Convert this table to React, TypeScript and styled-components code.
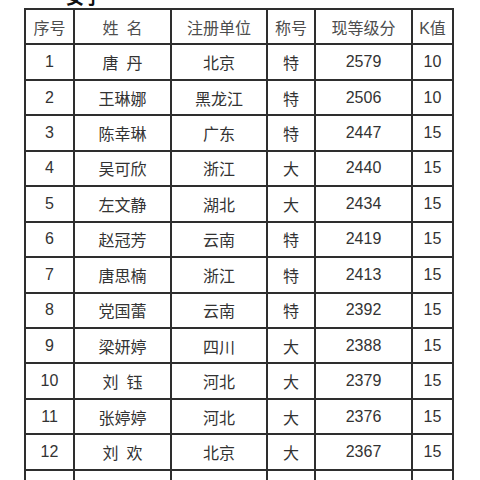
import React from "react";
import styled, { createGlobalStyle } from "styled-components";

const Global = createGlobalStyle`
  html, body { margin: 0; padding: 0; background: #fff; overflow: hidden; }
  body { font-family: "Liberation Sans", "Noto Sans CJK SC", sans-serif; }
`;

const Page = styled.div`
  padding-left: 24px;
  width: 480px;
  height: 480px;
  box-sizing: border-box;
  overflow: hidden;
`;

const Title = styled.div`
  margin: -13px 0 0 42px;
  height: 19px;
  font-size: 18px;
  line-height: 19px;
  font-weight: 700;
  color: #111;
  font-family: "Noto Sans CJK SC", sans-serif;
`;

const Grid = styled.div`
  margin-top: 2px;
  display: inline-grid;
  grid-template-columns: 47px 95px 94px 46px 95px 39px;
  grid-auto-rows: 33.44px;
  gap: 2px;
  padding: 2px;
  background: #2e2e2e;
`;

const Cell = styled.div<{ $head?: boolean }>`
  background: #fff;
  display: flex;
  align-items: center;
  justify-content: center;
  font-size: 16px;
  color: ${(p) => (p.$head ? "#4d4d4d" : "#333")};
  white-space: pre;
  font-family: "Liberation Sans", "Noto Sans CJK SC", sans-serif;
`;

const head = ["序号", "姓\u2002名", "注册单位", "称号", "现等级分", "K值"];
const rows: string[][] = [
  ["1", "唐\u2002丹", "北京", "特", "2579", "10"],
  ["2", "王琳娜", "黑龙江", "特", "2506", "10"],
  ["3", "陈幸琳", "广东", "特", "2447", "15"],
  ["4", "吴可欣", "浙江", "大", "2440", "15"],
  ["5", "左文静", "湖北", "大", "2434", "15"],
  ["6", "赵冠芳", "云南", "特", "2419", "15"],
  ["7", "唐思楠", "浙江", "特", "2413", "15"],
  ["8", "党国蕾", "云南", "特", "2392", "15"],
  ["9", "梁妍婷", "四川", "大", "2388", "15"],
  ["10", "刘\u2002钰", "河北", "大", "2379", "15"],
  ["11", "张婷婷", "河北", "大", "2376", "15"],
  ["12", "刘\u2002欢", "北京", "大", "2367", "15"],
  ["", "", "", "", "", ""],
];

export default function App() {
  return (
    <>
      <Global />
      <Page>
        <Title>女子</Title>
        <Grid>
          {head.map((h, i) => (
            <Cell $head key={"h" + i}>{h}</Cell>
          ))}
          {rows.map((r, ri) =>
            r.map((c, ci) => <Cell key={ri + "-" + ci}>{c}</Cell>)
          )}
        </Grid>
      </Page>
    </>
  );
}
